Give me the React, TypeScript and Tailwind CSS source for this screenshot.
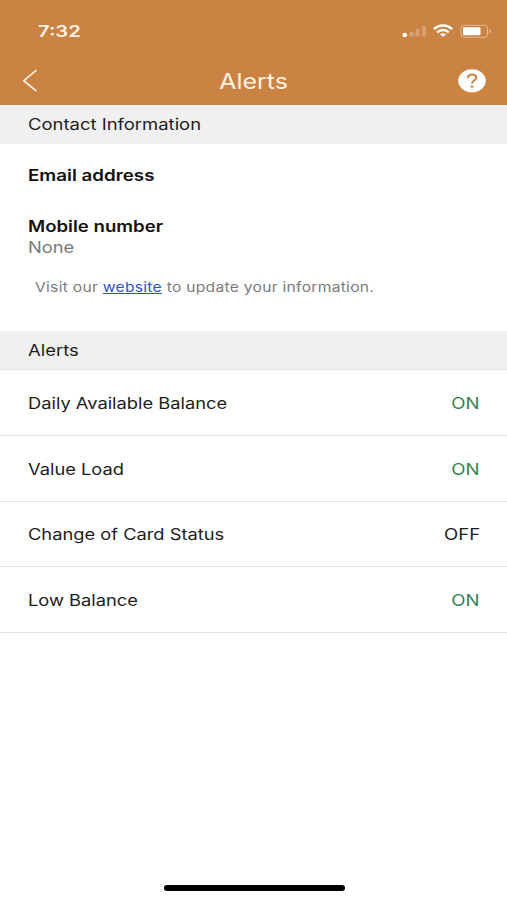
import React from 'react';

const App: React.FC = () => {
  const alerts = [
    { name: 'Daily Available Balance', on: true },
    { name: 'Value Load', on: true },
    { name: 'Change of Card Status', on: false },
    { name: 'Low Balance', on: true }
  ];

  return (
    <div className="w-full h-[900px] flex flex-col bg-white overflow-hidden font-['Inter','Liberation_Sans',sans-serif] text-[15.5px] leading-5 text-[#1c1c1e]">
      <header className="h-[105px] shrink-0 bg-[#ca8342] text-white">
        {/* Status bar */}
        <div className="h-[56px] pt-[21px] pl-[38px] pr-[14px] flex justify-between items-start">
          <span className="inline-block origin-left scale-x-[1.26] text-[16px] font-semibold text-[#fff3e4]">7:32</span>
          <div className="flex items-start pt-px">
            <svg width="25" height="18" viewBox="0 0 25 18" fill="#fff">
              <circle cx="2.8" cy="13" r="2.3" />
              <rect x="7.5" y="10" width="4" height="4.5" rx="1" opacity="0.25" />
              <rect x="13.5" y="7" width="4" height="7.5" rx="1" opacity="0.25" />
              <rect x="20" y="3.7" width="4" height="10.8" rx="1" opacity="0.25" />
            </svg>
            <svg className="ml-[6px]" width="20" height="18" viewBox="0 0 20 18" fill="none" stroke="#fff" strokeWidth="2.4">
              <path d="M0.9 7.2 C6 2.2 14 2.2 19.1 7.2" />
              <path d="M4.2 10.4 C7.6 7.1 12.4 7.1 15.8 10.4" />
              <path d="M6.9 12.3 C8.7 10.8 11.3 10.8 13.1 12.3 L10 15 Z" fill="#fff" stroke="none" />
            </svg>
            <svg className="ml-[7px]" width="33" height="18" viewBox="0 0 33 18">
              <rect x="1" y="3.3" width="26.5" height="12" rx="3" fill="none" stroke="#fff" opacity="0.45" />
              <rect x="3" y="5.3" width="17.5" height="8" rx="1.2" fill="#fff" />
              <path d="M29.3 7.2 C31.6 8 31.6 10.6 29.3 11.4 Z" fill="#fff" opacity="0.5" />
            </svg>
          </div>
        </div>
        {/* Navigation bar */}
        <div className="h-[49px] pl-[22px] pr-[21px] grid grid-cols-[1fr_auto_1fr] items-center">
          <svg width="16" height="24" viewBox="0 0 16 24" fill="none" stroke="#fff3e4" strokeWidth="1.7">
            <path d="M14.5 1.2 L1.8 11.7 L14.5 22.2" />
          </svg>
          <h1 className="inline-block scale-x-[1.16] text-[21.5px] leading-6 font-normal text-[#fff3e4]">Alerts</h1>
          <svg className="justify-self-end" width="28" height="24" viewBox="0 0 28 24">
            <ellipse cx="14" cy="11.8" rx="13.8" ry="11.5" fill="#fff" />
            <path d="M9.9 9.2 C10 6.8 11.8 5.5 14.1 5.5 C16.4 5.5 18.2 6.8 18.2 8.8 C18.2 11.6 14 11.4 14 14.6" fill="none" stroke="#ca8342" strokeWidth="2" />
            <ellipse cx="14" cy="17.6" rx="1.4" ry="1.2" fill="#ca8342" />
          </svg>
        </div>
      </header>

      <div className="h-[39px] shrink-0 pl-7 pt-px flex items-center bg-[#f0f0f0]">
        <h2 className="origin-left scale-x-[1.19]">Contact Information</h2>
      </div>
      <section className="h-[187px] shrink-0 pl-7 pt-[22px]">
        <div className="h-[51px]">
          <h3 className="inline-block origin-left scale-x-[1.21] font-semibold text-[#111]">Email address</h3>
        </div>
        <div className="h-[60px] flex flex-col items-start">
          <h3 className="origin-left scale-x-[1.2] font-semibold text-[#111]">Mobile number</h3>
          <p className="mt-px origin-left scale-x-[1.18] text-[#77777a]">None</p>
        </div>
        <p className="ml-[7px] inline-block whitespace-nowrap origin-left scale-x-[1.2] text-[13px] tracking-[0.24px] text-[#7a7a7c]">
          Visit our <a className="text-[#2c50c8] underline" href="#">website</a> to update your information.
        </p>
      </section>

      <div className="h-[39px] shrink-0 pl-7 pt-[2px] flex items-center bg-[#f0f0f0] border-b border-[#e5e5e5]">
        <h2 className="origin-left scale-x-[1.19]">Alerts</h2>
      </div>
      <ul>
        {alerts.map((alert) => (
          <li key={alert.name} className="h-[65.75px] pl-7 pr-[27px] pt-[3px] flex items-center justify-between border-b border-[#e4e4e4]">
            <span className="origin-left scale-x-[1.18]">{alert.name}</span>
            <span className={`origin-right scale-x-[1.2] ${alert.on ? 'text-[#35804f]' : 'text-[#1c1c1e]'}`}>
              {alert.on ? 'ON' : 'OFF'}
            </span>
          </li>
        ))}
      </ul>

      {/* Home indicator */}
      <div className="mt-auto mb-[9px] ml-[164px] w-[181px] h-[6px] shrink-0 rounded-full bg-black"></div>
    </div>
  );
};

export default App;
